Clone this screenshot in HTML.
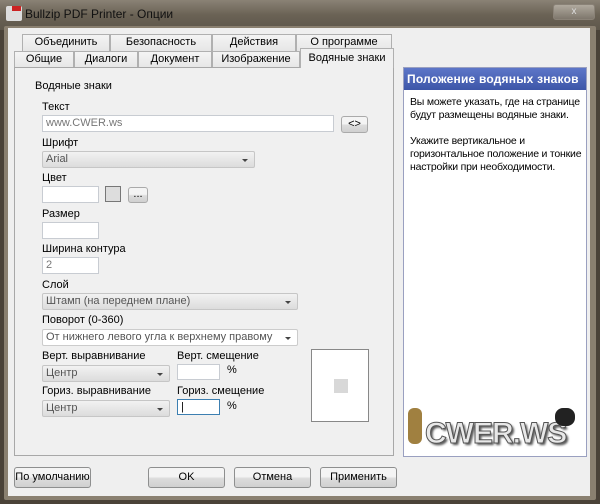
<!DOCTYPE html>
<html><head><meta charset="utf-8"><style>
*{box-sizing:border-box;margin:0;padding:0}
body{width:600px;height:504px;overflow:hidden;background:#4a4238;font-family:"Liberation Sans","Noto Sans CJK SC",sans-serif;font-size:11px;color:#000;position:relative}
.a{position:absolute}
.title{left:0;top:0;width:600px;height:30px;background:linear-gradient(#8a8275,#6a6255 50%,#5e574b);}
.frame{left:4px;top:26px;width:592px;height:474px;background:#8a8070;border-radius:2px}
.client{left:8px;top:28px;width:582px;height:468px;background:#efefef}
.tab{position:absolute;height:17px;border:1px solid #b0b0b0;border-bottom:none;background:linear-gradient(#f4f4f4,#e6e6e6);text-align:center;line-height:15px;font-size:11px}
.lbl{position:absolute;font-size:11px}
.in{position:absolute;background:#fff;border:1px solid #c8ccd2;height:17px;font-size:11px;color:#777;padding-left:3px;line-height:15px}
.dd{position:absolute;height:17px;border:1px solid #c6c6c6;border-radius:2px;background:linear-gradient(#f2f2f2,#dcdcdc);color:#555;padding-left:3px;line-height:15px}
.dd:after{content:"";position:absolute;right:6px;top:7px;border:3px solid transparent;border-top:3px solid #444}
.btn{position:absolute;height:21px;border:1px solid #8e8f8f;border-radius:3px;background:linear-gradient(#f4f4f4 45%,#dcdcdc 55%,#d0d0d0);text-align:center;line-height:19px;font-size:11px}
</style></head><body>
<div class="a title"></div>
<div class="a" style="left:6px;top:6px;width:16px;height:15px;background:#ddd;border-radius:2px"><div style="width:9px;height:5px;background:#c22;margin-left:6px"></div></div>
<div class="a" style="left:25px;top:7px;color:#111;font-size:12px">Bullzip PDF Printer - Опции</div>
<div class="a" style="left:553px;top:4px;width:42px;height:16px;border:1px solid #8a8277;border-radius:3px;background:linear-gradient(#b0a99e,#7e776c);color:#ddd;text-align:center;font-size:10px;line-height:14px">x</div>
<div class="a frame"></div>
<div class="a client"></div>
<div class="tab" style="left:22px;top:34px;width:88px">Объединить</div>
<div class="tab" style="left:110px;top:34px;width:102px">Безопасность</div>
<div class="tab" style="left:212px;top:34px;width:84px">Действия</div>
<div class="tab" style="left:296px;top:34px;width:96px">О программе</div>
<div class="tab" style="left:14px;top:51px;width:60px">Общие</div>
<div class="tab" style="left:74px;top:51px;width:64px">Диалоги</div>
<div class="tab" style="left:138px;top:51px;width:74px">Документ</div>
<div class="tab" style="left:212px;top:51px;width:88px">Изображение</div>
<div class="a" style="left:14px;top:67px;width:380px;height:389px;border:1px solid #a8a8a8;background:#f0f0f0"></div>
<div class="tab" style="left:300px;top:48px;width:94px;height:20px;background:#f0f0f0;border-bottom:none;line-height:18px">Водяные знаки</div>
<div class="lbl" style="left:35px;top:80px">Водяные знаки</div>
<div class="lbl" style="left:42px;top:101px">Текст</div>
<div class="in" style="left:42px;top:115px;width:292px">www.CWER.ws</div>
<div class="btn" style="left:341px;top:116px;width:27px;height:17px;line-height:14px;border-color:#aaa">&lt;&gt;</div>
<div class="lbl" style="left:42px;top:137px">Шрифт</div>
<div class="dd" style="left:42px;top:151px;width:213px">Arial</div>
<div class="lbl" style="left:42px;top:172px">Цвет</div>
<div class="in" style="left:42px;top:186px;width:57px"></div>
<div class="a" style="left:105px;top:186px;width:16px;height:16px;border:1px solid #777;background:#ddd"></div>
<div class="btn" style="left:128px;top:187px;width:20px;height:16px;line-height:12px;border-color:#aaa">...</div>
<div class="lbl" style="left:42px;top:208px">Размер</div>
<div class="in" style="left:42px;top:222px;width:57px"></div>
<div class="lbl" style="left:42px;top:243px">Ширина контура</div>
<div class="in" style="left:42px;top:257px;width:57px">2</div>
<div class="lbl" style="left:42px;top:279px">Слой</div>
<div class="dd" style="left:42px;top:293px;width:256px">Штамп (на переднем плане)</div>
<div class="lbl" style="left:42px;top:314px">Поворот (0-360)</div>
<div class="dd" style="left:42px;top:329px;width:256px;background:#fff;border-color:#ccc">От нижнего левого угла к верхнему правому</div>
<div class="lbl" style="left:42px;top:350px">Верт. выравнивание</div>
<div class="lbl" style="left:177px;top:350px">Верт. смещение</div>
<div class="dd" style="left:42px;top:365px;width:128px">Центр</div>
<div class="in" style="left:177px;top:364px;width:43px;height:16px"></div>
<div class="lbl" style="left:227px;top:364px">%</div>
<div class="lbl" style="left:42px;top:385px">Гориз. выравнивание</div>
<div class="lbl" style="left:177px;top:385px">Гориз. смещение</div>
<div class="dd" style="left:42px;top:400px;width:128px">Центр</div>
<div class="in" style="left:177px;top:399px;width:43px;height:16px;border-color:#3c7fb1;color:#000">|</div>
<div class="lbl" style="left:227px;top:400px">%</div>
<div class="a" style="left:311px;top:349px;width:58px;height:73px;border:1px solid #888;background:#fff"><div style="position:absolute;left:22px;top:29px;width:14px;height:14px;background:#d8d8d8"></div></div>
<div class="a" style="left:403px;top:67px;width:184px;height:390px;border:1px solid #9aa0c0;background:#fff"></div>
<div class="a" style="left:404px;top:68px;width:182px;height:22px;background:linear-gradient(#5d76c8,#3d56a8);color:#fff;font-size:12px;font-weight:bold;line-height:22px;padding-left:3px;white-space:nowrap;overflow:hidden;letter-spacing:.2px">Положение водяных знаков</div>
<div class="a" style="left:410px;top:96px;width:178px;line-height:13px;font-size:10.5px;letter-spacing:-0.2px">Вы можете указать, где на странице будут размещены водяные знаки.<br><br>Укажите вертикальное и горизонтальное положение и тонкие настройки при необходимости.</div>
<div class="a" style="left:425px;top:417px;font-size:30px;font-weight:bold;color:#e8e8e8;-webkit-text-stroke:1px #555;text-shadow:2px 2px 2px #555;letter-spacing:-1px">CWER.WS</div>
<div class="a" style="left:408px;top:408px;width:14px;height:36px;background:#a08040;border-radius:6px"></div>
<div class="a" style="left:555px;top:408px;width:20px;height:18px;background:#222;border-radius:8px"></div>
<div class="btn" style="left:14px;top:467px;width:77px">По умолчанию</div>
<div class="btn" style="left:148px;top:467px;width:77px">OK</div>
<div class="btn" style="left:234px;top:467px;width:77px">Отмена</div>
<div class="btn" style="left:320px;top:467px;width:77px">Применить</div>
</body></html>
